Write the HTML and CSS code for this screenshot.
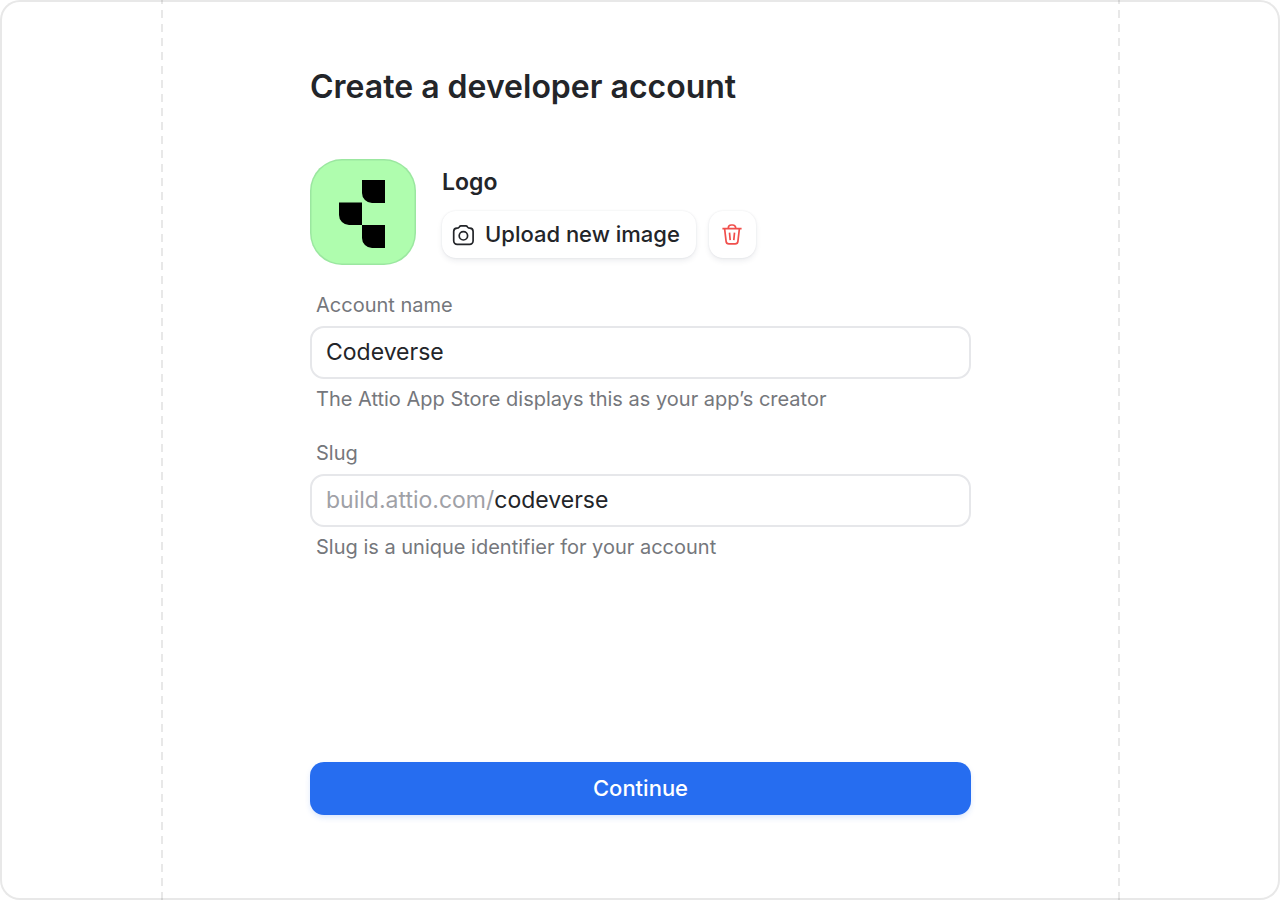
FILE: index.html
```html
<!DOCTYPE html>
<html lang="en">
<head>
<meta charset="utf-8">
<meta name="viewport" content="width=device-width, initial-scale=1">
<title>Create a developer account</title>
<link rel="stylesheet" href="styles.css">
</head>
<body>
<div class="frame">
  <main class="column">
    <form class="form">
      <h1 class="title">Create a developer account</h1>
      <section class="logo-row">
        <svg class="logo" viewBox="0 0 106 106" role="img" aria-label="Account logo">
          <rect width="106" height="106" rx="32" fill="#9be7a0"/>
          <rect x="1.5" y="1.5" width="103" height="103" rx="30.5" fill="#affdae"/>
          <path d="M52 21h23v23H62a10 10 0 0 1-10-10zM29 43.500h23v22.500H39a10 10 0 0 1-10-10zM52 66h23v23H62a10 10 0 0 1-10-10z"/>
        </svg>
        <div class="logo-side">
          <h2 class="logo-title">Logo</h2>
          <div class="actions">
            <button class="btn upload" type="button">
              <svg class="icon" viewBox="0 0 24 24" aria-hidden="true">
                <path d="M5 5.100c.9 0 1.600-.3 2.100-.9l.3-.4c.4-.6.9-.9 1.600-.9h4.800c.7 0 1.200.3 1.600.9l.3.400c.5.600 1.200.900 2.100.900a3.400 3.400 0 0 1 3.300 3.400v9.300a3.500 3.500 0 0 1-3.500 3.500H5.200a3.500 3.500 0 0 1-3.500-3.500V8.500A3.400 3.400 0 0 1 5 5.100z"/>
                <circle cx="11.400" cy="12.800" r="4.200"/>
              </svg>
              <span class="btn-text">Upload new image</span>
            </button>
            <button class="btn remove" type="button" aria-label="Remove logo">
              <svg class="icon" viewBox="0 0 24 24" aria-hidden="true">
                <path d="M2.400 5.700h19.200M8.300 5.500V5a3 3 0 0 1 3-3h1.400a3 3 0 0 1 3 3v.5M4.600 5.700l1.500 12.700a2.800 2.800 0 0 0 2.800 2.500h6.200a2.800 2.800 0 0 0 2.800-2.500L19.400 5.700M9.500 9.700l.7 7.500M14.500 9.700l-.7 7.500"/>
              </svg>
            </button>
          </div>
        </div>
      </section>
      <div class="field">
        <label class="label" for="name">Account name</label>
        <div class="box"><input class="input" id="name" type="text" value="Codeverse" aria-describedby="name-hint"></div>
        <p class="hint" id="name-hint">The Attio App Store displays this as your app’s creator</p>
      </div>
      <div class="field">
        <label class="label" for="slug">Slug</label>
        <div class="box"><span class="prefix">build.attio.com/</span><input class="input" id="slug" type="text" value="codeverse" aria-describedby="slug-hint"></div>
        <p class="hint" id="slug-hint">Slug is a unique identifier for your account</p>
      </div>
      <button class="submit" type="submit">Continue</button>
    </form>
  </main>
</div>
</body>
</html>
```
FILE: styles.css
```css
* { box-sizing: border-box; }

body {
  margin: 0;
  background: #fff;
  color: #232529;
  font-family: Inter, "Liberation Sans", sans-serif;
}

h1, h2, p { margin: 0; }

button, input { font: inherit; color: inherit; }

.frame {
  display: flex;
  min-height: 100vh;
  padding: 0 160px 0 161px;
  border-radius: 20px;
  box-shadow: inset 0 0 0 2px #e8e8e8;
}

/* Dashed guides on both sides of the column */
.column {
  --dash: linear-gradient(rgba(0, 0, 0, 0.09) 8px, transparent 8px);
  flex: 1;
  display: flex;
  justify-content: center;
  padding: 64px 24px 85px;
  background: var(--dash) left 10px / 2px 14px repeat-y, var(--dash) right 10px / 2px 14px repeat-y;
}

.form {
  display: flex;
  flex-direction: column;
  width: 100%;
  max-width: 661px;
}

.title {
  font-size: 32px;
  line-height: 46px;
  font-weight: 600;
}

.logo-row {
  display: flex;
  gap: 26px;
  margin-top: 49px;
}

.logo { width: 106px; height: 106px; flex: none; }

.logo-title {
  margin-top: 7px;
  font-size: 23px;
  line-height: 32px;
  font-weight: 600;
}

.actions {
  display: flex;
  gap: 13px;
  margin-top: 13px;
}

.btn {
  display: flex;
  align-items: center;
  justify-content: center;
  gap: 9px;
  height: 47px;
  padding: 0 16px 0 10px;
  border: 0;
  border-radius: 14px;
  background: #fff;
  box-shadow: 0 0 2px rgba(28, 40, 64, 0.1), 0 3px 6px -1px rgba(28, 40, 64, 0.1);
  font-size: 22px;
  line-height: 32px;
  font-weight: 500;
}

.btn-text { padding-bottom: 2px; }

.remove {
  width: 47px;
  padding: 0;
  color: #f04f4c;
}

.icon {
  width: 24px;
  height: 24px;
  fill: none;
  stroke: currentColor;
  stroke-width: 1.7;
}

.field {
  display: flex;
  flex-direction: column;
  margin-top: 26px;
}

.label, .hint {
  padding: 0 6px;
  color: #75777c;
  font-size: 20px;
  line-height: 28px;
}

.box {
  display: flex;
  align-items: center;
  height: 53px;
  margin: 7px 0 6px;
  padding: 0 14px 2px;
  border: 2px solid #e6e7ea;
  border-radius: 14px;
  font-size: 23px;
  line-height: 32px;
}

.prefix { color: #9fa1a7; }

.input {
  flex: 1;
  min-width: 0;
  padding: 0;
  border: 0;
  outline: 0;
  background: none;
}

.submit {
  height: 53px;
  margin-top: auto;
  padding: 0 14px 2px;
  border: 0;
  border-radius: 14px;
  background: #266df0;
  box-shadow: 0 3px 6px -1px rgba(38, 109, 240, 0.2);
  color: #fff;
  font-size: 22px;
  line-height: 32px;
  font-weight: 500;
}
```
